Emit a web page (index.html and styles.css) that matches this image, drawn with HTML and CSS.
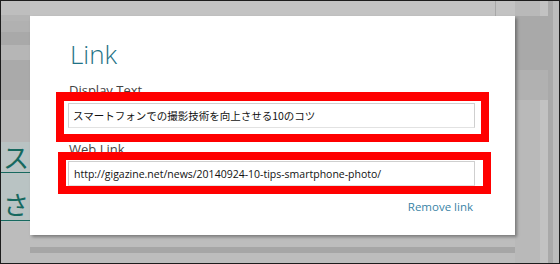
FILE: index.html
```html
<!DOCTYPE html>
<html lang="ja">
<head>
    <meta charset="UTF-8">
    <meta name="viewport" content="width=device-width, initial-scale=1.0">
    <title>Link</title>
    <link rel="stylesheet" href="styles.css">
</head>
<body>
    <div class="screen">
        <div class="backdrop">
            <div class="side-text">
                <span class="kana">ス</span>
                <span class="kana">さ</span>
            </div>
        </div>

        <div class="dialog">
            <h1 class="dialog-title">Link</h1>
            <div class="field-label">Display Text</div>
            <div class="field-box field-box-jp">スマートフォンでの撮影技術を向上させる10のコツ</div>
            <div class="field-label field-label-second">Web Link</div>
            <div class="field-box field-box-url">http://gigazine.net/news/20140924-10-tips-smartphone-photo/</div>
            <div class="dialog-actions">
                <a class="remove-link" href="#">Remove link</a>
            </div>
        </div>

        <!-- red annotation frames drawn over the screenshot -->
        <div class="mark mark-text"></div>
        <div class="mark mark-url"></div>
    </div>
</body>
</html>
```

FILE: styles.css
```css
html, body {
    margin: 0;
    padding: 0;
}

body {
    font-family: "Open Sans", "Noto Sans", sans-serif;
    background-color: #bcbcbc;
}

.screen {
    position: relative;
    width: 560px;
    height: 264px;
    box-sizing: border-box;
    border: 1px solid #1c1c1c;
    overflow: hidden;
}

.backdrop {
    height: 100%;
    background-color: #bcbcbc;
    background-image:
        linear-gradient(to bottom,
            #bebebe 0, #bebebe 14px,
            #b4b4b4 14px, #b4b4b4 20px,
            #b1b1b1 20px, #b1b1b1 31px,
            #a9a9a9 31px, #a9a9a9 44px,
            #b6b6b6 44px, #b6b6b6 59px,
            #aaaaaa 59px, #aaaaaa 99px,
            #b7b7b7 99px, #b7b7b7 141px,
            #b9c3c3 141px, #b9c3c3 221px,
            #bcbcbc 221px),
        linear-gradient(to bottom,
            transparent 0, transparent 15px,
            #a9a9a9 15px, #a9a9a9 69px,
            #b1b1b1 69px, #b1b1b1 99px,
            transparent 99px),
        linear-gradient(to right,
            #b9b9b9 0, #b9b9b9 25px,
            #c2c2c2 25px, #c2c2c2 33px,
            #a9a9a9 33px, #a9a9a9 38px,
            #bcbcbc 38px),
        linear-gradient(to bottom,
            #bdbdbd 0, #bdbdbd 11px,
            #a6a6a6 11px, #a6a6a6 17px,
            #bdbdbd 17px),
        linear-gradient(#a8a8a8, #a8a8a8),
        linear-gradient(#c3c3c3, #c3c3c3);
    background-size:
        29px 100%,
        33px 100%,
        45px 100%,
        100% 30px,
        1px 15px,
        100% 15px;
    background-position:
        0 0,
        514px 0,
        514px 0,
        0 235px,
        494px 0,
        0 0;
    background-repeat: no-repeat;
}

.side-text {
    display: flex;
    flex-direction: column;
    width: 29px;
    padding-top: 141px;
}

.kana {
    display: block;
    font-family: "Noto Sans CJK JP", sans-serif;
    font-size: 26px;
    line-height: 28px;
    height: 31px;
    padding-left: 2px;
    color: #17695f;
    border-bottom: 1px solid #17695f;
    box-sizing: border-box;
    padding-top: 1px;
}

.kana + .kana {
    height: 48px;
    padding-top: 17px;
}

.dialog {
    position: absolute;
    left: 29px;
    top: 15px;
    width: 485px;
    height: 219px;
    box-sizing: border-box;
    padding: 22px 40px 0 38px;
    background-color: #fff;
    box-shadow: 2px 2px 3px rgba(0, 0, 0, 0.35);
}

.dialog-title {
    margin: 0;
    padding-left: 2px;
    font-size: 26px;
    font-weight: 300;
    line-height: 32px;
    color: #1f7286;
}

.field-label {
    margin-top: 12px;
    padding-left: 1px;
    font-size: 13px;
    line-height: 16px;
    color: #444;
}

.field-label-second {
    margin-top: 13px;
}

.field-box {
    box-sizing: border-box;
    height: 25px;
    margin-top: 5px;
    padding-left: 4px;
    border: 1px solid #cfcfcf;
    border-bottom-color: #e2e2e2;
    background-color: #fff;
    color: #111;
    white-space: nowrap;
    overflow: hidden;
    display: flex;
    align-items: center;
}

.field-box-jp {
    font-family: "Noto Sans CJK JP", sans-serif;
    font-size: 10.5px;
}

.field-box-url {
    margin-top: 4px;
    padding-left: 5px;
    font-size: 10.5px;
}

.dialog-actions {
    margin-top: 8px;
    text-align: right;
    padding-right: 2px;
}

.remove-link {
    font-size: 11.5px;
    line-height: 16px;
    color: #3a84a6;
    text-decoration: none;
}

.mark {
    position: absolute;
    box-sizing: border-box;
    border: 8px solid #ff0000;
}

.mark-text {
    left: 55px;
    top: 91px;
    width: 433px;
    height: 50px;
    border-top-width: 9px;
}

.mark-url {
    left: 57px;
    top: 151px;
    width: 433px;
    height: 42px;
}
```
